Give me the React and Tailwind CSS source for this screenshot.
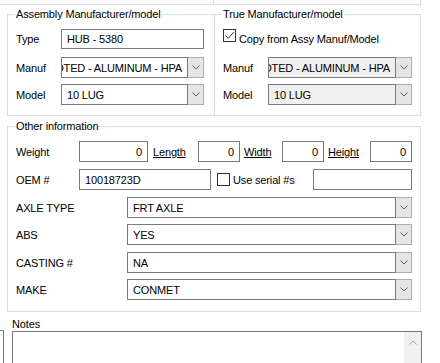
import React from 'react';

const Chevron = ({ up = false, color = '#606060' }) => (
  <svg width="8" height="5" viewBox="0 0 8 5" className={up ? 'rotate-180' : ''}>
    <path d="M0.5 0.5 L4 4 L7.5 0.5" fill="none" stroke={color} strokeWidth="1" />
  </svg>
);

const CheckBox = ({ checked }) => (
  <div className="w-[13px] h-[13px] shrink-0 border border-[#333333] bg-white flex items-center justify-center">
    {checked && (
      <svg width="11" height="11" viewBox="0 0 11 11">
        <path d="M1.5 5.5 L4.2 8.3 L9.6 2.2" fill="none" stroke="#333333" strokeWidth="1" />
      </svg>
    )}
  </div>
);

const TextBox = ({ className, value, right }) => (
  <div className={`border border-[#7a7a7a] bg-white flex items-center shrink-0 ${right ? 'justify-end pr-[5px]' : 'pl-[5px]'} ${className}`}>
    <span className="whitespace-nowrap">{value}</span>
  </div>
);

// text that is too long gets scrolled so its end shows, like the win32 combo
const Combo = ({ className, value, disabled }) => (
  <div className={`flex h-[21px] shrink-0 ${className}`}>
    <div className={`flex-1 min-w-0 flex justify-end items-center overflow-hidden border border-[#7a7a7a] ${disabled ? 'bg-[#f0f0f0]' : 'bg-white'}`}>
      <span className="shrink-0 min-w-full whitespace-nowrap pl-[5px] pr-[5px]">{value}</span>
    </div>
    <div className="w-[16px] flex items-center justify-center border-y border-r border-[#adadad] bg-[#e5e5e5]">
      <Chevron />
    </div>
  </div>
);

const Legend = ({ children }) => (
  <legend className="ml-[7px] px-[1px] leading-[15px]">{children}</legend>
);

const App = () => {
  const manuf = 'OTED - ALUMINUM - HPA';

  return (
    <div className="w-[440px] h-[363px] overflow-hidden bg-white text-black text-[11px] leading-[14px] tracking-[-0.15px] font-['Liberation_Sans',Arial,sans-serif]">
      {/* bottoms of the boxes above */}
      <div className="flex h-[5px]">
        <div className="w-[214px] border-b border-r border-[#dcdcdc]" />
        <div className="w-[207px] border-b border-r border-[#dcdcdc]" />
      </div>

      <div className="flex mt-[2px] ml-[7px]">
        <fieldset className="w-[208px] border border-[#dcdcdc]">
          <Legend>Assembly Manufacturer/model</Legend>
          <div className="pl-[8px] pt-[7px] pb-[10px]">
            <div className="flex items-center h-[20px]">
              <span className="w-[45px]">Type</span>
              <TextBox className="w-[143px] h-[20px]" value="HUB - 5380" />
            </div>
            <div className="flex items-center mt-[8px]">
              <span className="w-[45px]">Manuf</span>
              <Combo className="w-[143px]" value={manuf} />
            </div>
            <div className="flex items-center mt-[6px]">
              <span className="w-[45px]">Model</span>
              <Combo className="w-[143px]" value="10 LUG" />
            </div>
          </div>
        </fieldset>

        <fieldset className="w-[206px] border-y border-r border-[#dcdcdc]">
          <Legend>True Manufacturer/model</Legend>
          <div className="pl-[8px] pt-[7px] pb-[10px]">
            <div className="flex items-start h-[20px]">
              <CheckBox checked />
              <span className="ml-[3px] mt-[3px]">Copy from Assy Manuf/Model</span>
            </div>
            <div className="flex items-center mt-[8px]">
              <span className="w-[45px]">Manuf</span>
              <Combo className="w-[144px]" value={manuf} disabled />
            </div>
            <div className="flex items-center mt-[6px]">
              <span className="w-[45px]">Model</span>
              <Combo className="w-[144px]" value="10 LUG" disabled />
            </div>
          </div>
        </fieldset>
      </div>

      <fieldset className="mt-[3px] ml-[7px] w-[414px] border border-[#dcdcdc]">
        <Legend>Other information</Legend>
        <div className="pl-[8px] pt-[7px] pb-[11px]">
          <div className="flex items-center h-[21px]">
            <span className="w-[63px]">Weight</span>
            <TextBox className="w-[69px] h-[21px]" value="0" right />
            <span className="w-[50px] pl-[5px] underline">Length</span>
            <TextBox className="w-[42px] h-[21px]" value="0" right />
            <span className="w-[42px] pl-[4px] underline">Width</span>
            <TextBox className="w-[42px] h-[21px]" value="0" right />
            <span className="w-[46px] pl-[4px] underline">Height</span>
            <TextBox className="w-[42px] h-[21px]" value="0" right />
          </div>
          <div className="flex items-center h-[21px] mt-[7px]">
            <span className="w-[63px]">OEM #</span>
            <TextBox className="w-[132px] h-[21px]" value="10018723D" />
            <div className="w-[102px] pl-[6px] flex items-center">
              <CheckBox />
              <span className="ml-[3px]">Use serial #s</span>
            </div>
            <TextBox className="w-[99px] h-[21px]" value="" />
          </div>
          <div className="flex items-center mt-[7px]">
            <span className="w-[111px]">AXLE TYPE</span>
            <Combo className="w-[285px]" value="FRT AXLE" />
          </div>
          <div className="flex items-center mt-[6px]">
            <span className="w-[111px]">ABS</span>
            <Combo className="w-[285px]" value="YES" />
          </div>
          <div className="flex items-center mt-[7px]">
            <span className="w-[111px]">CASTING #</span>
            <Combo className="w-[285px]" value="NA" />
          </div>
          <div className="flex items-center mt-[6px]">
            <span className="w-[111px]">MAKE</span>
            <Combo className="w-[285px]" value="CONMET" />
          </div>
        </div>
      </fieldset>

      <div className="flex">
        <div className="w-[4px] h-[40px] mt-[18px] border-t border-r border-[#7a7a7a]" />
        <div className="ml-[8px]">
          <div className="mt-[6px] leading-[13px]">Notes</div>
          <div className="w-[410px] h-[60px] border border-[#7a7a7a] bg-white flex justify-end">
            <div className="w-[17px] bg-[#f0f0f0] flex justify-center pt-[8px]">
              <div className="h-[5px]">
                <Chevron up color="#a3a3a3" />
              </div>
            </div>
          </div>
        </div>
      </div>
    </div>
  );
};

export default App;
